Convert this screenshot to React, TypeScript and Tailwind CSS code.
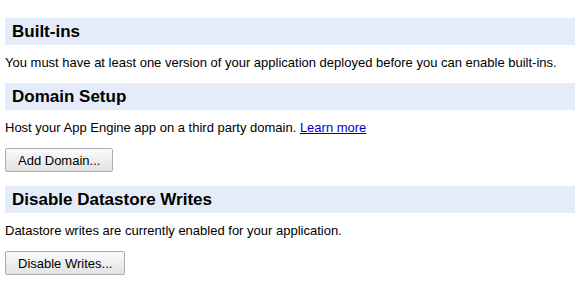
export default function App() {
  return (
    <div className="bg-white w-[575px] h-[289px] overflow-hidden pt-[18px] pl-[5px] text-[13px] text-black font-['Liberation_Sans',Arial,sans-serif]">
      <Section title="Built-ins">
        <p className="leading-[15px] mt-[10px] mb-[13px]">
          You must have at least one version of your application deployed before you can enable built-ins.
        </p>
      </Section>
      <Section title="Domain Setup">
        <p className="leading-[15px] mt-[10px]">
          Host your App Engine app on a third party domain.{" "}
          <a href="#" className="text-[#0000cc] underline">Learn more</a>
        </p>
        <Btn label="Add Domain..." />
      </Section>
      <Section title="Disable Datastore Writes">
        <p className="leading-[15px] mt-[10px]">
          Datastore writes are currently enabled for your application.
        </p>
        <Btn label="Disable Writes..." />
      </Section>
    </div>
  );
}

function Section({ title, children }: { title: string; children: React.ReactNode }) {
  return (
    <div>
      <h2 className="bg-[#e5ecf9] h-[27px] pl-[7px] flex items-center text-[17px] font-bold">{title}</h2>
      {children}
    </div>
  );
}

function Btn({ label }: { label: string }) {
  return (
    <button className="mt-[13px] mb-[14px] h-[24px] px-[12px] border border-[#acacac] rounded-[2px] bg-gradient-to-b from-[#fbfbfb] to-[#e2e2e2] text-[13px] text-black leading-none">
      {label}
    </button>
  );
}
